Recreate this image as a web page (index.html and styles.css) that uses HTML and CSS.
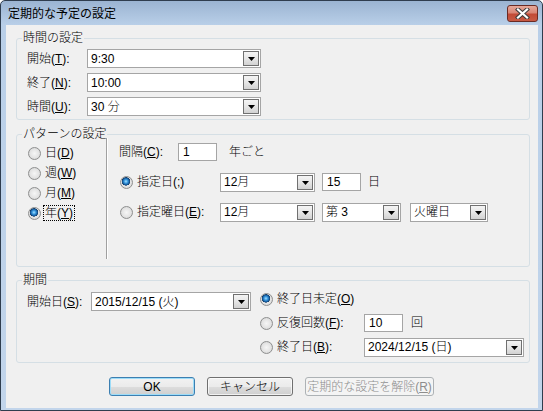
FILE: index.html
```html
<!DOCTYPE html>
<html lang="ja">
<head>
<meta charset="utf-8">
<title>定期的な予定の設定</title>
<link rel="stylesheet" href="styles.css">
</head>
<body>
<div class="window">
  <div class="titlebar">
    <span class="title">定期的な予定の設定</span>
    <div class="close">
      <svg width="15" height="11" viewBox="0 0 15 11"><path d="M3 1.5 L12 9.5 M12 1.5 L3 9.5" stroke="#3d3d3d" stroke-width="4.2" stroke-linecap="square"/><path d="M3 1.5 L12 9.5 M12 1.5 L3 9.5" stroke="#ffffff" stroke-width="2.2" stroke-linecap="square"/></svg>
    </div>
  </div>
  <div class="client">
    <fieldset class="group g-time">
      <legend>時間の設定</legend>
      <div class="time-rows">
        <span class="lbl">開始(<u>T</u>):</span>
        <div class="combo w-time"><span class="val">9:30</span><span class="dd"><svg width="7" height="4" viewBox="0 0 7 4"><polygon points="0,0 7,0 3.5,4" fill="#000"/></svg></span></div>
        <span class="lbl">終了(<u>N</u>):</span>
        <div class="combo w-time"><span class="val">10:00</span><span class="dd"><svg width="7" height="4" viewBox="0 0 7 4"><polygon points="0,0 7,0 3.5,4" fill="#000"/></svg></span></div>
        <span class="lbl">時間(<u>U</u>):</span>
        <div class="combo w-time"><span class="val">30 分</span><span class="dd"><svg width="7" height="4" viewBox="0 0 7 4"><polygon points="0,0 7,0 3.5,4" fill="#000"/></svg></span></div>
      </div>
    </fieldset>

    <fieldset class="group g-pattern">
      <legend>パターンの設定</legend>
      <div class="pattern">
        <div class="freq">
          <div class="opt"><span class="radio"></span><span class="rlbl">日(<u>D</u>)</span></div>
          <div class="opt"><span class="radio"></span><span class="rlbl">週(<u>W</u>)</span></div>
          <div class="opt"><span class="radio"></span><span class="rlbl">月(<u>M</u>)</span></div>
          <div class="opt"><span class="radio checked"></span><span class="rlbl focus">年(<u>Y</u>)</span></div>
        </div>
        <div class="sep"></div>
        <div class="detail">
          <div class="drow">
            <span class="lbl-int">間隔(<u>C</u>):</span>
            <div class="edit w-int">1</div>
            <span class="after-int">年ごと</span>
          </div>
          <div class="drow">
            <div class="rcol"><span class="radio checked"></span><span class="rlbl">指定日(<u>;</u>)</span></div>
            <div class="combo w-month"><span class="val">12月</span><span class="dd"><svg width="7" height="4" viewBox="0 0 7 4"><polygon points="0,0 7,0 3.5,4" fill="#000"/></svg></span></div>
            <div class="edit w-day">15</div>
            <span class="after-day">日</span>
          </div>
          <div class="drow">
            <div class="rcol"><span class="radio"></span><span class="rlbl">指定曜日(<u>E</u>):</span></div>
            <div class="combo w-month"><span class="val">12月</span><span class="dd"><svg width="7" height="4" viewBox="0 0 7 4"><polygon points="0,0 7,0 3.5,4" fill="#000"/></svg></span></div>
            <div class="combo w-week"><span class="val">第 3</span><span class="dd"><svg width="7" height="4" viewBox="0 0 7 4"><polygon points="0,0 7,0 3.5,4" fill="#000"/></svg></span></div>
            <div class="combo w-wday"><span class="val">火曜日</span><span class="dd"><svg width="7" height="4" viewBox="0 0 7 4"><polygon points="0,0 7,0 3.5,4" fill="#000"/></svg></span></div>
          </div>
        </div>
      </div>
    </fieldset>

    <fieldset class="group g-range">
      <legend>期間</legend>
      <div class="range">
        <div class="start">
          <span class="lbl-start">開始日(<u>S</u>):</span>
          <div class="combo w-date"><span class="val">2015/12/15 (火)</span><span class="dd"><svg width="7" height="4" viewBox="0 0 7 4"><polygon points="0,0 7,0 3.5,4" fill="#000"/></svg></span></div>
        </div>
        <div class="ends">
          <div class="rcol2"><span class="radio checked"></span><span class="rlbl">終了日未定(<u>O</u>)</span></div>
          <div></div>
          <div class="rcol2"><span class="radio"></span><span class="rlbl">反復回数(<u>F</u>):</span></div>
          <div class="cell"><div class="edit w-int">10</div><span class="after-cnt">回</span></div>
          <div class="rcol2"><span class="radio"></span><span class="rlbl">終了日(<u>B</u>):</span></div>
          <div class="cell"><div class="combo w-end"><span class="val">2024/12/15 (日)</span><span class="dd"><svg width="7" height="4" viewBox="0 0 7 4"><polygon points="0,0 7,0 3.5,4" fill="#000"/></svg></span></div></div>
        </div>
      </div>
    </fieldset>

    <div class="buttons">
      <button class="btn default w-btn">OK</button>
      <button class="btn w-btn">キャンセル</button>
      <button class="btn disabled w-btn2" disabled>定期的な設定を解除(<u>R</u>)</button>
    </div>
  </div>
</div>
</body>
</html>
```

FILE: styles.css
```css
* { box-sizing: border-box; }

body {
  margin: 0;
  font-family: "Liberation Sans", "Noto Sans CJK JP", sans-serif;
  font-size: 12px;
  font-weight: 300;
  line-height: 14px;
  color: #000;
  background: #fff;
}

u { text-decoration: underline; text-underline-offset: 1px; }

.window {
  width: 543px;
  height: 411px;
  border: 1px solid #2f3d4e;
  border-radius: 5px 5px 0 0;
  background: linear-gradient(to bottom, #9bb4d2 0, #b9cfe8 24px, #c2d5eb 100%);
  display: flex;
  flex-direction: column;
}

.titlebar {
  height: 24px;
  flex: none;
  display: flex;
  align-items: center;
  padding: 0 4px 0 7px;
}

.title {
  flex: 1;
  font-family: "Noto Sans CJK JP", sans-serif;
  font-size: 12px;
  font-weight: 400;
  color: #000;
}

.close {
  width: 31px;
  height: 17px;
  margin-top: 1px;
  border: 1px solid #6a2b24;
  border-radius: 3px;
  background: linear-gradient(to bottom, #e6a899 0, #d98575 45%, #c24a36 55%, #c85a44 100%);
  display: flex;
  align-items: center;
  justify-content: center;
}

.client {
  flex: 1;
  margin: 0 4px 2px 5px;
  background: #f0f0f0;
  padding: 6px 8px 0 10px;
  display: flex;
  flex-direction: column;
}

.group {
  margin: 0;
  padding: 0;
  border: 1px solid #d5dfe5;
  border-radius: 3px;
  min-width: 0;
}

.group legend {
  margin-left: 5px;
  padding: 0 1px;
  font-size: 12px;
  line-height: 14px;
}

.g-pattern { margin-top: 7px; }
.g-range { margin-top: 6px; }

/* time group */
.time-rows {
  display: grid;
  grid-template-columns: 60px 174px;
  row-gap: 5px;
  padding: 4px 0 3px 10px;
  align-items: center;
}

.combo {
  display: flex;
  align-items: center;
  height: 19px;
  border: 1px solid #a5a5a5;
  background: #fff;
  padding: 1px;
  flex: none;
}

.combo .val {
  flex: 1;
  padding-left: 2px;
  white-space: nowrap;
  overflow: hidden;
}

.combo .dd {
  width: 16px;
  height: 15px;
  flex: none;
  border: 1px solid #707070;
  background: linear-gradient(to bottom, #f4f4f4 0, #e6e6e6 50%, #d2d2d2 100%);
  display: flex;
  align-items: center;
  justify-content: center;
  padding-top: 1px;
}

.combo .dd svg { display: block; }

.w-time { width: 174px; }
.w-month { width: 95px; }
.w-week { width: 79px; margin-left: 7px; }
.w-wday { width: 78px; margin-left: 9px; }
.w-date { width: 160px; }
.w-end { width: 160px; }

.edit {
  height: 18px;
  border: 1px solid #a5a5a5;
  background: #fff;
  padding-left: 4px;
  display: flex;
  align-items: center;
  flex: none;
}

.w-int { width: 39px; }
.w-day { width: 39px; margin-left: 7px; }

/* radios */
.radio {
  width: 13px;
  height: 13px;
  flex: none;
  border-radius: 50%;
  border: 1px solid #8e8f8f;
  background: radial-gradient(circle at 50% 50%, #f6f6f6 0, #e2e2e2 60%, #cfcfcf 85%, #f2f2f2 100%);
}

.radio.checked {
  background:
    radial-gradient(circle at 45% 40%, #a6e1ff 0, #3a9ae0 1.8px, #14589a 3.4px, #123d68 4px, rgba(0,0,0,0) 4.4px),
    radial-gradient(circle at 50% 50%, #f6f6f6 0, #e2e2e2 60%, #cfcfcf 85%, #f2f2f2 100%);
}

.rlbl { margin-left: 4px; white-space: nowrap; }

.focus {
  margin-left: 2px;
  padding: 0 1px;
  border: 1px dotted #000;
}

/* pattern group */
.pattern {
  display: flex;
  height: 125px;
}

.freq {
  width: 89px;
  flex: none;
  padding: 2px 0 0 11px;
}

.opt {
  height: 20px;
  display: flex;
  align-items: center;
}

.sep {
  width: 2px;
  height: 121px;
  margin-top: -3px;
  flex: none;
  border-left: 1px solid #a0a0a0;
  border-right: 1px solid #ffffff;
}

.detail {
  padding: 1px 0 0 11px;
  display: flex;
  flex-direction: column;
  row-gap: 10px;
}

.drow {
  height: 20px;
  display: flex;
  align-items: center;
}

.lbl-int { width: 59px; flex: none; }
.after-int { margin-left: 12px; }
.after-day { margin-left: 7px; }

.rcol {
  width: 101px;
  flex: none;
  display: flex;
  align-items: center;
  padding-left: 1px;
}

/* range group */
.range {
  display: flex;
  height: 75px;
  padding-left: 10px;
}

.start {
  display: flex;
  align-items: center;
  height: 19px;
  margin-top: 5px;
}

.lbl-start { width: 64px; flex: none; }

.ends {
  margin-left: 9px;
  display: grid;
  grid-template-columns: 104px auto;
  grid-auto-rows: 24px;
  align-items: center;
}

.rcol2 {
  display: flex;
  align-items: center;
}

.cell {
  display: flex;
  align-items: center;
}

.after-cnt { margin-left: 8px; }

/* buttons */
.buttons {
  display: flex;
  gap: 12px;
  margin-top: 14px;
  padding-left: 93px;
}

.btn {
  height: 19px;
  padding: 0;
  font-family: "Liberation Sans", "Noto Sans CJK JP", sans-serif;
  font-size: 12px;
  font-weight: 300;
  line-height: 14px;
  color: #000;
  border: 1px solid #707070;
  border-radius: 3px;
  background: linear-gradient(to bottom, #f2f2f2 0, #ebebeb 50%, #dddddd 51%, #cfcfcf 100%);
  box-shadow: inset 0 0 0 1px rgba(255,255,255,0.7);
}

.btn.default {
  border-color: #3c7fb1;
  box-shadow: inset 0 0 0 1px #9ddcf8;
}

.btn.disabled {
  color: #8d8d8d;
  border-color: #adb2b5;
  background: #f4f4f4;
  box-shadow: none;
}

.w-btn { width: 86px; }
.w-btn2 { width: 129px; }
```
